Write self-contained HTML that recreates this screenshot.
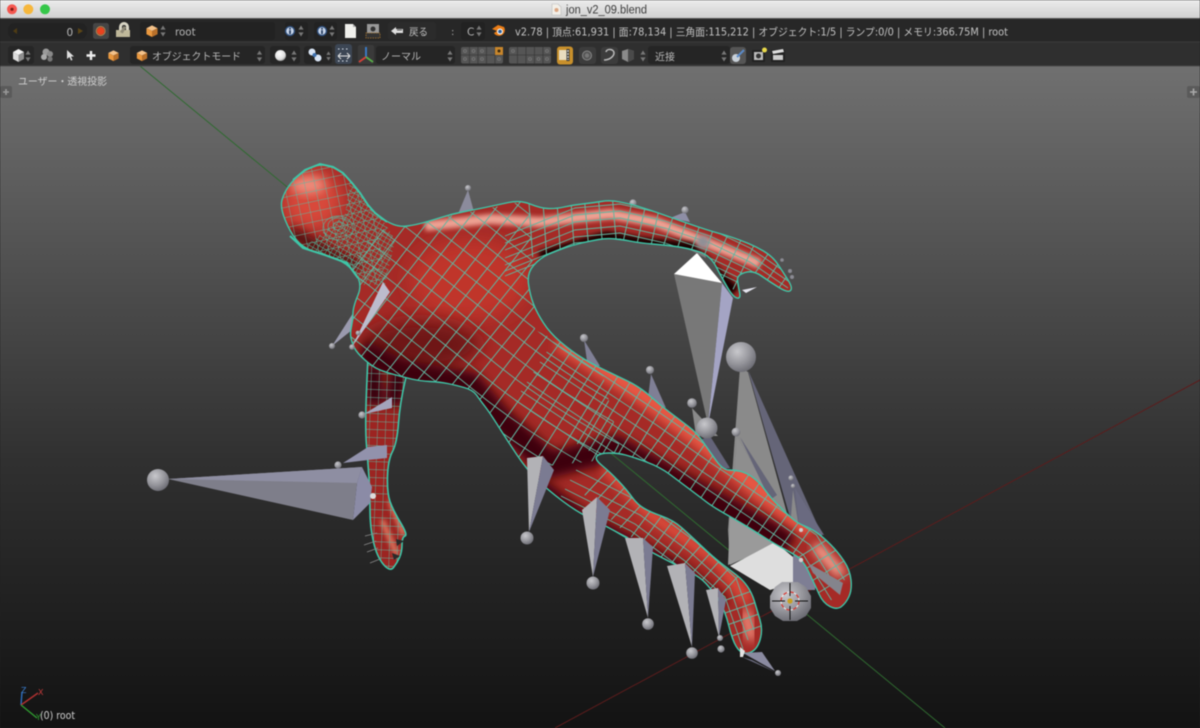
<!DOCTYPE html>
<html><head><meta charset="utf-8"><title>jon_v2_09.blend</title>
<style>html,body{margin:0;padding:0;background:#222;overflow:hidden}svg{display:block;filter:blur(.4px)}
text{font-family:"DejaVu Sans","Noto Sans CJK JP",sans-serif}</style></head><body>
<svg width="1200" height="728" viewBox="0 0 1200 728" xmlns="http://www.w3.org/2000/svg">
<defs>
<linearGradient id="bg" x1="0" y1="66" x2="0" y2="728" gradientUnits="userSpaceOnUse"><stop offset="0" stop-color="#707070"/><stop offset=".3" stop-color="#505050"/><stop offset=".6" stop-color="#303030"/><stop offset="1" stop-color="#131313"/></linearGradient>
<linearGradient id="tb" x1="0" y1="0" x2="0" y2="1"><stop offset="0" stop-color="#ececec"/><stop offset="1" stop-color="#d0d0d0"/></linearGradient>
<radialGradient id="sp" cx=".38" cy=".32" r=".75"><stop offset="0" stop-color="#c8c8cc"/><stop offset=".55" stop-color="#96969c"/><stop offset="1" stop-color="#66666e"/></radialGradient>
<radialGradient id="wsp" cx=".4" cy=".35" r=".7"><stop offset="0" stop-color="#fff"/><stop offset=".7" stop-color="#ddd"/><stop offset="1" stop-color="#888"/></radialGradient>
<filter id="b2" x="-30%" y="-30%" width="160%" height="160%"><feGaussianBlur stdDeviation="2.5"/></filter>
<filter id="b5" x="-30%" y="-30%" width="160%" height="160%"><feGaussianBlur stdDeviation="5"/></filter>
<filter id="b9" x="-30%" y="-30%" width="160%" height="160%"><feGaussianBlur stdDeviation="9"/></filter>
<pattern id="gridB" width="10" height="10" patternUnits="userSpaceOnUse" patternTransform="rotate(-12 320 210)"><path d="M0 0H10M0 0V10" fill="none" stroke="#62b5a0" stroke-width=".9"/></pattern>
<pattern id="gridD" width="4.500" height="4.500" patternUnits="userSpaceOnUse" patternTransform="rotate(30 340 250)"><path d="M0 0H5M0 0V5" fill="none" stroke="#46c4a4" stroke-width=".9"/></pattern>
<pattern id="gridC" width="8" height="8" patternUnits="userSpaceOnUse" patternTransform="rotate(2)"><path d="M0 0H8M0 0V8" fill="none" stroke="#62b5a0" stroke-width=".9"/></pattern>
<path id="bodyP" d="M285,219.5Q280,207 282,200Q284,193 288.5,186.5Q293,180 299,175Q305,170 312.5,167Q320,164 326.5,165.5Q333,167 338,170Q343,173 347.5,178Q352,183 356,188Q360,193 364,199Q368,205 371.5,209Q375,213 381,217.5Q387,222 393.5,224.5Q400,227 407.5,226Q415,225 424,222.5Q433,220 442.5,217Q452,214 462.5,212Q473,210 485,207.5Q497,205 508.5,202.5Q520,200 530,204Q540,208 547.5,208.5Q555,209 564,207Q573,205 582.5,204Q592,203 601,201.5Q610,200 620,202Q630,204 640,207Q650,210 664,215Q678,220 692.5,225Q707,230 716,232.5Q725,235 732.5,237.5Q740,240 748.5,243.5Q757,247 765,252Q773,257 778,264.5Q783,272 788,280Q793,288 790.500,290.500Q788,293 779,287.5Q770,282 761.5,276Q753,270 745,272.5Q737,275 737.5,280Q738,285 739.5,292Q741,299 737,298Q733,297 727.5,287.5Q722,278 716,266.5Q710,255 698.5,251.5Q687,248 676,246.5Q665,245 652.5,244Q640,243 632.5,241.5Q625,240 616,239Q607,238 598.5,239.5Q590,241 581.5,243Q573,245 564.5,248Q556,251 548,254.5Q540,258 533.5,265.5Q527,273 528.5,284Q530,295 533.5,304Q537,313 543.5,323Q550,333 560,341.5Q570,350 580,356.5Q590,363 602.5,369Q615,375 627.5,381Q640,387 650,396Q660,405 670,412.5Q680,420 688.5,426.5Q697,433 703.5,442.5Q710,452 716.5,461Q723,470 729,470Q735,470 741,471.5Q747,473 753.5,478Q760,483 765,490Q770,497 777.5,504.5Q785,512 791,517.5Q797,523 803.5,525.5Q810,528 816.5,532.5Q823,537 830.5,544.5Q838,552 844,561Q850,570 851,580Q852,590 849,596.5Q846,603 841.5,606.5Q837,610 830,606.5Q823,603 819,594Q815,585 809,572.5Q803,560 796.5,556Q790,552 781.5,547.5Q773,543 759,534Q745,525 729,516Q713,507 706.5,502Q700,497 690,489.5Q680,482 670,474.5Q660,467 646.5,462Q633,457 625.5,455Q618,453 609,453Q600,453 597,456Q594,459 602,465.5Q610,472 618.5,481Q627,490 632,497Q637,504 643.5,508Q650,512 661.5,516Q673,520 681.5,527.5Q690,535 701.5,546Q713,557 721.5,563.5Q730,570 736.5,575Q743,580 747.5,586.5Q752,593 754.5,601.5Q757,610 760,620Q763,630 760,640Q757,650 750,652.5Q743,655 738,649Q733,643 729,626.5Q725,610 718.5,600Q712,590 706,583.5Q700,577 690,572Q680,567 666.5,560Q653,553 641.5,546.5Q630,540 620,534Q610,528 593.5,520Q577,512 562.5,501Q548,490 537.5,480Q527,470 517,455Q507,440 498.5,426.5Q490,413 485,406.5Q480,400 476.5,395Q473,390 464,387.5Q455,385 447.5,383.5Q440,382 430,381.5Q420,381 411.5,379Q403,377 394,374.5Q385,372 379,369.5Q373,367 365,360Q357,353 354.5,348Q352,343 351,338Q350,333 351.5,326.5Q353,320 353,313.5Q353,307 358,295Q363,283 355,273Q347,263 336,259Q325,255 314,251.5Q303,248 296.5,240Q290,232 285,219.5Z"/>
<path id="foreP" d="M366.5,391Q365,427 366.5,445Q368,463 369,478Q370,493 370,510Q370,527 373.5,542Q377,557 383.5,564.5Q390,572 393.5,567.5Q397,563 399.5,557.5Q402,552 402,544.5Q402,537 405,536Q408,535 400.5,522.5Q393,510 390,501.5Q387,493 387.5,476.5Q388,460 392.5,451.5Q397,443 398.5,423Q400,403 405,381.5L410,360L368,355Z"/>
<clipPath id="mainClip"><use href="#bodyP"/></clipPath>
<clipPath id="foreClip"><use href="#foreP"/></clipPath>
<clipPath id="torsoR"><polygon points="350,262 380,230 530,200 535,330 600,362 622,458 510,470 345,372"/></clipPath>
<path id="tL" d="M300 190Q420 280 500 345T680 455" fill="none"/>
<path id="aL" d="M505 250 575 222 620 218 665 228 710 243 750 262 788 288" fill="none"/>
<path id="lL" d="M540 362 650 435 700 470 760 510 810 545 838 590" fill="none"/>
<path id="sL" d="M570 480 640 515 690 552 730 588 748 640" fill="none"/>
<symbol id="ud" viewBox="0 0 6 12" overflow="visible"><path d="M3 0.5 5.6 4.6H.4ZM3 11.5 .4 7.4H5.6Z" fill="#777"/></symbol>
<symbol id="cube" viewBox="0 0 14 14" overflow="visible"><path d="M7 1 13 4 7 7 1 4Z" fill="#f4c28a"/><path d="M1 4 7 7V13.5L1 10.5Z" fill="#e9983f"/><path d="M13 4 7 7V13.5L13 10.5Z" fill="#b8702a"/></symbol>
<symbol id="info" viewBox="0 0 14 14" overflow="visible"><circle cx="7" cy="7" r="6" fill="#2f4f7c"/><circle cx="7" cy="7" r="4.4" fill="#c9d6ea"/><rect x="6" y="6" width="2" height="4.6" fill="#22395c"/><rect x="6" y="3.4" width="2" height="1.8" fill="#22395c"/></symbol>
</defs>

<!-- viewport -->
<rect x="0" y="66" width="1200" height="662" fill="url(#bg)"/>
<line x1="140" y1="66" x2="945" y2="728" stroke="#2f6a30" stroke-width="1"/>
<line x1="555" y1="728" x2="1200" y2="380" stroke="#5c1c1c" stroke-width="1"/>

<!-- bones behind body -->
<g>
<polygon points="740,367 748,372 793,535 730,565 728,530" fill="#8a8a8a"/>
<polygon points="748,370 822,535 795,535" fill="#656578"/>
<polygon points="730,515 728,565 790,540 760,522" fill="#9a9a9a"/>
<polygon points="730,566 775,542 793,557 793,583 770,590" fill="#dedede"/>
<polygon points="793,557 793,590 815,590 822,535 800,530" fill="#7e7e94"/>
<polygon points="737,437 735,472 768,492" fill="#8e8e8e"/>
<polygon points="740,437 777,495 770,500" fill="#656578"/>
<polygon points="793,490 790,530 800,535" fill="#8a8a8a"/>
<polygon points="795,488 824,535 800,532" fill="#6a6a80"/>
<polygon points="674,274 722,283 708,425" fill="#787878"/>
<polygon points="722,283 733,298 708,425" fill="#a4a4c4"/>
<polygon points="697,253 674,274 722,283" fill="#fff"/>
<polygon points="690,250 703,240 706,258" fill="#7a7a7a"/>
<polygon points="692,408 696,436 718,436" fill="#8a8a8a"/>
<polygon points="710,436 730,468 718,470 700,440" fill="#636378"/>
<polygon points="468,190 458,214 474,212" fill="#8b8b9c"/>
<polygon points="670,218 685,212 690,222" fill="#8e8ea6"/>
<polygon points="584,340 588,368 600,366" fill="#7f7f95"/>
<polygon points="651,374 648,398 666,408" fill="#7f7f95"/>
<polygon points="332,346 355,310 352,330" fill="#9a9aae"/>
<circle cx="468" cy="188" r="3" fill="url(#sp)"/>
<circle cx="633" cy="203" r="3.6" fill="url(#sp)"/>
<circle cx="685" cy="210" r="3.6" fill="url(#sp)"/>
<circle cx="584" cy="338" r="4" fill="url(#sp)"/>
<circle cx="650" cy="370" r="4" fill="url(#sp)"/>
<circle cx="692" cy="403" r="4.8" fill="url(#sp)"/>
<circle cx="736" cy="432" r="4.4" fill="url(#sp)"/>
<circle cx="791" cy="478" r="2.6" fill="url(#sp)"/>
<circle cx="793" cy="486" r="2.2" fill="url(#sp)"/>
<circle cx="741" cy="357" r="15" fill="url(#sp)"/>
<circle cx="707" cy="428" r="10.5" fill="url(#sp)"/>
<circle cx="782" cy="260" r="1.8" fill="#8a8a92"/>
<circle cx="790" cy="271" r="2" fill="#8a8a92"/>
<circle cx="792" cy="277" r="2" fill="#8a8a92"/>
<path d="M742 290 757 287 746 293Z" fill="#e4e4ee"/>
<path d="M733 275 740 274 737 279Z" fill="#dcdce6"/>
<circle cx="332" cy="346" r="3" fill="url(#sp)"/>
</g>

<!-- forearm -->
<g clip-path="url(#foreClip)">
<rect x="360" y="350" width="55" height="225" fill="#9c2421"/>
<path d="M373 365 375 405M400 365 394 405" stroke="#300408" stroke-width="16" filter="url(#b5)" fill="none"/>
<path d="M390 500 404 535M382 520 397 555" stroke="#e07a62" stroke-width="5" filter="url(#b2)" fill="none"/>
<rect x="360" y="350" width="55" height="225" fill="url(#gridC)"/>
</g>
<use href="#foreP" fill="none" stroke="#3ec6a8" stroke-width="1.600"/>
<path d="M396 539 404 541 397 546ZM392 553 400 556 394 560Z" fill="#2a2a2a"/>
<path d="M365 536 377 533M364 545 376 541M367 552 378 548M370 563 380 559" stroke="#8a8a8a" stroke-width=".7"/>

<!-- main body -->
<g clip-path="url(#mainClip)">
<rect x="270" y="155" width="600" height="510" fill="#a52a26"/>
<!-- head shading -->
<ellipse cx="312" cy="200" rx="30" ry="30" fill="#d8483a" filter="url(#b9)"/>
<ellipse cx="308" cy="185" rx="18" ry="9" fill="#ee8c7c" filter="url(#b5)"/>
<path d="M290 232 325 252 358 268" stroke="#4a0810" stroke-width="12" fill="none" filter="url(#b5)"/>
<!-- chest / torso -->
<ellipse cx="470" cy="280" rx="60" ry="40" fill="#c03529" filter="url(#b9)"/>
<ellipse cx="420" cy="345" rx="60" ry="24" fill="#6e1216" filter="url(#b9)"/>
<path d="M425 226 490 219 540 222 610 214 655 222 700 240 760 264" stroke="#fbb8a8" stroke-width="10" fill="none" filter="url(#b2)" opacity=".85"/>
<path d="M360 352 400 372 470 385 500 420 550 465 615 448 700 495 790 545" stroke="#3c040c" stroke-width="26" fill="none" filter="url(#b5)"/>
<path d="M525 476 580 518 680 572 722 606" stroke="#3c040c" stroke-width="18" fill="none" filter="url(#b5)"/>
<path d="M540 257 607 237 640 243 690 248 735 292" stroke="#150206" stroke-width="12" fill="none" filter="url(#b2)"/>
<path d="M560 340 640 392 700 438 760 490 812 530" stroke="#e85844" stroke-width="20" fill="none" filter="url(#b5)"/>
<path d="M605 466 650 514 720 562 748 602" stroke="#e2503c" stroke-width="11" fill="none" filter="url(#b5)"/>
<path d="M815 545 842 575" stroke="#ffb09c" stroke-width="10" fill="none" filter="url(#b5)"/>
<path d="M745 610 752 640" stroke="#ff9c88" stroke-width="9" fill="none" filter="url(#b5)"/>
<!-- mesh -->
<polygon points="278,160 372,160 385,285 280,260" fill="url(#gridB)"/>
<polygon points="350,180 378,212 395,240 385,285 355,285 300,250 320,235 345,215" fill="url(#gridD)"/>
<g fill="none" stroke="#4fc0a8" stroke-width=".7" opacity=".8">
<ellipse cx="338" cy="226" rx="5" ry="4"/><ellipse cx="338" cy="226" rx="10" ry="8"/><ellipse cx="338" cy="228" rx="15" ry="12"/>
</g>
<g clip-path="url(#torsoR)" fill="none" stroke="#62b5a0" stroke-width=".9">
<path d="M300 190Q420 280 500 345T680 455" stroke-width="260" stroke-dasharray="1 14"/>
<use href="#tL" transform="translate(10,-14)"/><use href="#tL" transform="translate(20,-28)"/><use href="#tL" transform="translate(30,-42)"/><use href="#tL" transform="translate(40,-56)"/><use href="#tL" transform="translate(50,-70)"/><use href="#tL" transform="translate(60,-84)"/><use href="#tL" transform="translate(70,-98)"/>
<use href="#tL"/>
<use href="#tL" transform="translate(-10,14)"/><use href="#tL" transform="translate(-20,28)"/><use href="#tL" transform="translate(-30,42)"/><use href="#tL" transform="translate(-40,56)"/><use href="#tL" transform="translate(-50,70)"/><use href="#tL" transform="translate(-60,84)"/><use href="#tL" transform="translate(-70,98)"/>
</g>
<g fill="none" stroke="#62b5a0" stroke-width=".9">
<path d="M530 225 575 222 620 218 665 228 710 243 750 262 788 288" stroke-width="64" stroke-dasharray="1 13"/>
<use href="#aL" transform="translate(0,-14)"/><use href="#aL" transform="translate(0,-7)"/><use href="#aL"/><use href="#aL" transform="translate(0,8)"/><use href="#aL" transform="translate(0,15)"/><use href="#aL" transform="translate(0,21)"/><use href="#aL" transform="translate(0,26)"/>
<path d="M600 405 650 435 700 470 760 510 810 545 838 590" stroke-width="90" stroke-dasharray="1 12.5"/>
<use href="#lL" transform="translate(13,-20)"/><use href="#lL" transform="translate(6.500,-10)"/><use href="#lL"/><use href="#lL" transform="translate(-6.500,10)"/><use href="#lL" transform="translate(-13,20)"/><use href="#lL" transform="translate(-19,29)"/><use href="#lL" transform="translate(-25,38)"/>
<path d="M600 478 640 515 690 552 730 588 748 640" stroke-width="46" stroke-dasharray="1 11"/>
<use href="#sL" transform="translate(6,-10)"/><use href="#sL"/><use href="#sL" transform="translate(-5,9)"/><use href="#sL" transform="translate(-9,16)"/><use href="#sL" transform="translate(-13,22)"/>
</g>
</g>
<use href="#bodyP" fill="none" stroke="#3ec6a8" stroke-width="1.400" stroke-linejoin="round"/>
<path d="M293 180 305 170 320 164 333 167 343 173 352 183 360 193 368 205 375 213 387 222M290 236 303 248 325 255 347 263 358 278" fill="none" stroke="#3ec6a8" stroke-width="2"/>

<!-- bones in front -->
<g>
<polygon points="168,479 362,467 357,483 353,520" fill="#7e7e8a"/>
<polygon points="168,479 362,467 357,483" fill="#8e8ea2"/>
<polygon points="362,467 372,487 370,503 353,520 357,483" fill="#8b8ba6"/>
<circle cx="158" cy="480" r="11" fill="url(#sp)"/>
<polygon points="343,463 368,447 387,445 387,458 368,460" fill="#9292ac"/>
<circle cx="338" cy="465" r="3.600" fill="url(#sp)"/>
<polygon points="364,414 392,397 392,408" fill="#a4a4bc"/>
<circle cx="362" cy="415" r="3.600" fill="url(#sp)"/>
<circle cx="373" cy="496" r="3" fill="#dcdcdc"/>
<polygon points="352,347 383,282 390,292" fill="#bcbccc"/>
<circle cx="352" cy="347" r="2.800" fill="url(#sp)"/>
<circle cx="358" cy="333" r="2.400" fill="url(#sp)"/>
<circle cx="703" cy="242" r="6.500" fill="#8f8f96" filter="url(#b2)"/>
<polygon points="527,458 543,456 529,532" fill="#b2b2b6"/>
<polygon points="543,456 554,470 529,532" fill="#7b7b92"/>
<circle cx="527" cy="538" r="6.500" fill="url(#sp)"/>
<polygon points="582,510 597,497 593,577" fill="#b2b2b6"/>
<polygon points="597,497 610,510 593,577" fill="#7b7b92"/>
<circle cx="593" cy="583" r="6.500" fill="url(#sp)"/>
<polygon points="625,538 643,538 648,618" fill="#b2b2b6"/>
<polygon points="643,538 653,547 648,618" fill="#7b7b92"/>
<circle cx="648" cy="624" r="5.800" fill="url(#sp)"/>
<polygon points="667,566 685,563 692,647" fill="#b2b2b6"/>
<polygon points="685,563 695,573 692,647" fill="#7b7b92"/>
<circle cx="692" cy="653" r="5.800" fill="url(#sp)"/>
<polygon points="706,590 718,588 719,637" fill="#b2b2b6"/>
<polygon points="718,588 726,600 719,637" fill="#7b7b92"/>
<circle cx="720" cy="638" r="3" fill="url(#sp)"/>
<circle cx="721" cy="649" r="3.600" fill="url(#sp)"/>
<polygon points="743,653 762,652 775,671" fill="#8a8aa0"/>
<polygon points="742,657 775,672 752,660" fill="#6c6c80"/>
<polygon points="740,647 745,651 743,657 740,657" fill="#e4e4e4"/>
<circle cx="778" cy="673" r="3" fill="url(#sp)"/>
<polygon points="808,563 843,583 840,595 813,573" fill="#84848c"/>
<circle cx="801" cy="530" r="2" fill="#cfcfcf"/>
<circle cx="801" cy="560" r="2.200" fill="#cfcfcf"/>
</g>

<!-- 3D cursor sphere -->
<polygon points="782,582 798,582 806,587 811,596 811,608 806,616 797,621 783,621 775,616 770,608 770,596 775,587" fill="url(#sp)"/>
<circle cx="790" cy="601" r="9" fill="none" stroke="#eee" stroke-width="1"/>
<circle cx="790" cy="601" r="9" fill="none" stroke="#d8322c" stroke-width="1.200" stroke-dasharray="4 3"/>
<path d="M772 601H785M795 601H808M790 583V596M790 606V620" stroke="#111" stroke-width="1"/>
<circle cx="790" cy="601" r="2.600" fill="#c8a020"/>

<!-- viewport overlay -->
<text x="18" y="85" font-size="10.300" fill="#cfcfcf" textLength="89" lengthAdjust="spacingAndGlyphs">ユーザー・透視投影</text>
<rect x="0" y="86" width="12" height="12" rx="2" fill="#5a5a5a"/><path d="M3 92H9M6 89V95" stroke="#999" stroke-width="1.600"/>
<rect x="1187" y="86" width="13" height="12" rx="2" fill="#5a5a5a"/><path d="M1190 92H1197M1193.500 88.500V95.500" stroke="#aaa" stroke-width="1.600"/>
<path d="M21 705 22 692" stroke="#2d6fc0" stroke-width="1.400"/><path d="M21 705 38 693" stroke="#b03030" stroke-width="1.400"/><path d="M21 705 37 718" stroke="#2f9a30" stroke-width="1.400"/>
<text x="21" y="693" font-size="8" fill="#3a7ed0">Z</text><text x="38" y="695" font-size="8" fill="#c43a3a">X</text><text x="36" y="720" font-size="8" fill="#2f9a30">Y</text>
<text x="40" y="719" font-size="10.500" fill="#cdcdcd" textLength="35" lengthAdjust="spacingAndGlyphs">(0) root</text>

<!-- title bar -->
<rect x="0" y="0" width="1200" height="18" fill="url(#tb)"/><rect y="18" width="1200" height="1" fill="#555"/>
<circle cx="12" cy="9.300" r="5" fill="#f4574f"/><circle cx="12" cy="9.300" r="1.600" fill="#7c1a14"/>
<circle cx="28.300" cy="9.300" r="5" fill="#f6b73c"/><circle cx="45" cy="9.300" r="5" fill="#35c749"/>
<path d="M552 4H558L561 7V15H552Z" fill="#f2efe8" stroke="#bbb" stroke-width=".6"/><circle cx="556.500" cy="10" r="2" fill="#dca682"/>
<text x="566" y="13.300" font-size="11.500" fill="#3c3c3c" style="font-family:'Liberation Sans',sans-serif" textLength="81" lengthAdjust="spacingAndGlyphs">jon_v2_09.blend</text>

<!-- header 1 -->
<rect x="0" y="19" width="1200" height="22.500" fill="#272727"/>
<rect x="0" y="41.500" width="1200" height="1" fill="#3c3c3c"/>
<rect x="8" y="23" width="79" height="16" rx="7" fill="#222"/>
<path d="M17 28V34L13 31Z" fill="#4f3c14"/><path d="M78 28V34L83 31Z" fill="#5c4616"/>
<text x="66.500" y="36" font-size="10.500" fill="#b8b8b8">0</text>
<rect x="93" y="23" width="16" height="16" rx="2.500" fill="#454545"/><circle cx="100.700" cy="31" r="3.800" fill="#e8421e"/><circle cx="100.700" cy="31" r="4.500" fill="none" stroke="#d89a50" stroke-width=".7"/>
<rect x="116" y="30" width="14" height="7" fill="#bfb89a"/><path d="M119 30V27A5 5 0 0 1 129 27V30H126V27A2 2 0 0 0 122 27V30Z" fill="#d8d4c4"/><rect x="122" y="26" width="3" height="7" fill="#8f8a78" transform="rotate(30 123 29)"/>
<rect x="140" y="22" width="135" height="18" rx="3" fill="#222"/>
<use href="#cube" x="145.500" y="24.500" width="13" height="13"/><use href="#ud" x="160" y="25" width="6" height="12"/>
<text x="175" y="35.300" font-size="10.300" fill="#b4b4b4">root</text>
<rect x="285" y="22" width="23" height="18" rx="3" fill="#222"/><use href="#info" x="284" y="25" width="12" height="12"/><use href="#ud" x="298" y="25" width="6" height="12"/>
<rect x="314" y="22" width="23" height="18" rx="3" fill="#222"/><use href="#info" x="316" y="25" width="12" height="12"/><use href="#ud" x="329" y="25" width="6" height="12"/>
<path d="M345 24H353L356 27V38H345Z" fill="#f0f0ec"/><path d="M353 24V27H356Z" fill="#aaa"/>
<rect x="367" y="24" width="12" height="9" fill="#999"/><circle cx="373" cy="29" r="2.500" fill="#333"/><rect x="366" y="33" width="14" height="5" fill="#333" stroke="#a8752e" stroke-width=".8" stroke-dasharray="1.500 1"/>
<rect x="388" y="22" width="48" height="18" rx="3" fill="#2b2b2b"/>
<path d="M391 31 396 27V29H403V33H396V35Z" fill="#dfdfdf"/><rect x="397" y="29.500" width="5" height="1" fill="#555"/>
<text x="409" y="35.300" font-size="10" fill="#bdbdbd" textLength="19" lengthAdjust="spacingAndGlyphs">戻る</text>
<text x="451" y="35" font-size="10" fill="#aaa">:</text>
<rect x="461" y="22" width="24" height="18" rx="3" fill="#222"/><text x="467" y="35.300" font-size="10.500" fill="#b4b4b4">C</text><use href="#ud" x="476" y="25" width="6" height="12"/>
<path d="M492 29 498 25 504 27A5.500 5.500 0 1 1 494 33L497 31Z" fill="#ea7d17"/><circle cx="500" cy="31.500" r="3" fill="#f4f4f4"/><circle cx="500" cy="31.500" r="1.800" fill="#2a5d9c"/>
<text x="515" y="35.300" font-size="10.500" fill="#c2c2c2" textLength="493" lengthAdjust="spacingAndGlyphs">v2.78 | 頂点:61,931 | 面:78,134 | 三角面:115,212 | オブジェクト:1/5 | ランプ:0/0 | メモリ:366.75M | root</text>

<!-- header 2 -->
<rect x="0" y="42.500" width="1200" height="23" fill="#2f2f2f"/>
<rect x="0" y="65.500" width="1200" height="1" fill="#4a4a4a"/>
<rect x="8" y="46" width="26" height="18" rx="3" fill="#262626"/>
<path d="M18.500 49 24 52 18.500 55 13 52Z" fill="#f2f2f2"/><path d="M13 52 18.500 55V62L13 59Z" fill="#dcdcdc"/><path d="M24 52 18.500 55V62L24 59Z" fill="#8f8f8f"/><use href="#ud" x="25" y="50" width="6" height="12"/>
<circle cx="46" cy="52" r="3.500" fill="#9a9a9a"/><circle cx="50" cy="54" r="3" fill="#8a8a8a"/><circle cx="44" cy="57" r="3" fill="#aaa"/><circle cx="50" cy="59" r="2.600" fill="#777"/>
<path d="M67 50 67 59 69.500 57 71 60.500 72.500 60 71 56.500 74 56.500Z" fill="#dedede"/>
<path d="M86.500 55.500H95.500M91 51V60" stroke="#eee" stroke-width="2.400"/>
<use href="#cube" x="107.500" y="49.500" width="12" height="12"/>
<rect x="130" y="46" width="135" height="18" rx="3" fill="#252525"/>
<use href="#cube" x="136" y="49.500" width="12" height="12"/>
<text x="152" y="60" font-size="10.200" fill="#b8b8b8" textLength="89" lengthAdjust="spacingAndGlyphs">オブジェクトモード</text><use href="#ud" x="256.500" y="50" width="6" height="12"/>
<rect x="270" y="46" width="30" height="18" rx="3" fill="#252525"/><circle cx="280.500" cy="55.500" r="5.500" fill="url(#wsp)"/><use href="#ud" x="291" y="50" width="6" height="12"/>
<rect x="304" y="46" width="28" height="18" rx="3" fill="#252525"/><circle cx="312" cy="52" r="3.500" fill="#d8e4f4"/><circle cx="318" cy="58" r="3.500" fill="#d8e4f4"/><circle cx="314.500" cy="55" r="2" fill="#3c70b0"/><use href="#ud" x="326" y="50" width="5" height="12"/>
<rect x="335" y="44" width="17" height="20" rx="3" fill="#3c4654"/>
<path d="M338 49H350M338 61H350" stroke="#dfe6f0" stroke-width="1" stroke-dasharray="1.500 2.500"/><path d="M338 56 341 53M338 56 341 59M338 56H350M350 56 347 53M350 56 347 59" stroke="#e4e4e4" stroke-width="1" fill="none"/>
<rect x="358" y="45" width="16" height="19" rx="2" fill="#3a3a3a"/><path d="M366 57V47" stroke="#3a7ed0" stroke-width="1.800"/><path d="M366 57 359 62" stroke="#d84038" stroke-width="1.800"/><path d="M366 57 373 62" stroke="#58b048" stroke-width="1.800"/>
<rect x="376" y="46" width="79" height="18" rx="3" fill="#252525"/>
<text x="381" y="60" font-size="10.200" fill="#b8b8b8" textLength="40" lengthAdjust="spacingAndGlyphs">ノーマル</text><use href="#ud" x="447" y="50" width="6" height="12"/>
<g fill="#555">
<rect x="461" y="47" width="42" height="16.500" rx="2"/><rect x="509" y="47" width="42" height="16.500" rx="2"/>
</g>
<g stroke="#3a3a3a" stroke-width=".8"><path d="M469.500 47V63.500M478 47V63.500M486.500 47V63.500M495 47V63.500M461 55H503M517.500 47V63.500M526 47V63.500M534.500 47V63.500M543 47V63.500M509 55H551"/></g>
<rect x="495" y="47" width="8" height="8" fill="#c8862c"/><circle cx="499" cy="51" r="1.500" fill="#3a2a10"/>
<g fill="none" stroke="#7a7a7a" stroke-width=".8"><circle cx="465" cy="51" r="1.400"/><circle cx="473.500" cy="51" r="1.400"/><circle cx="482" cy="51" r="1.400"/><circle cx="465" cy="59" r="1.400"/><circle cx="473.500" cy="59" r="1.400"/><circle cx="482" cy="59" r="1.400"/><circle cx="499" cy="59" r="1.400"/><circle cx="513" cy="51" r="1.400"/><circle cx="547" cy="51" r="1.400"/><circle cx="530" cy="59" r="1.400"/><circle cx="538.500" cy="59" r="1.400"/><circle cx="547" cy="59" r="1.400"/></g>
<rect x="557" y="46.500" width="16" height="18" rx="3" fill="#c8902c"/><rect x="559" y="50" width="8" height="10" fill="#e8dcc0"/><path d="M568 49V61" stroke="#333" stroke-width="3"/><path d="M568 50V60" stroke="#ddd" stroke-width="1.400" stroke-dasharray="2 1"/>
<rect x="579" y="47" width="17" height="17" rx="3" fill="#3c3c3c"/><circle cx="587" cy="55.500" r="4.500" fill="#555" stroke="#888"/><circle cx="587" cy="55.500" r="2.200" fill="#777"/>
<rect x="601" y="47" width="17" height="17" rx="3" fill="#3c3c3c"/><path d="M604 60C610 60 614 56 614 53 614 49 607 48 606 52" fill="none" stroke="#bbb" stroke-width="1.500"/>
<path d="M622 51 628 49 634 51V59L628 62 622 59Z" fill="#8a8a8a"/><path d="M628 49 634 51V59L628 62Z" fill="#4a4a4a"/><use href="#ud" x="640" y="50" width="6" height="12"/>
<rect x="648" y="46" width="82" height="18" rx="3" fill="#252525"/>
<text x="655" y="60.300" font-size="10" fill="#b8b8b8" textLength="20" lengthAdjust="spacingAndGlyphs">近接</text><use href="#ud" x="721" y="50" width="6" height="12"/>
<rect x="730" y="47" width="16" height="17" rx="3" fill="#555"/><circle cx="736" cy="58" r="4" fill="#c8d0d8"/><path d="M737 57 744 50" stroke="#5a8ac8" stroke-width="2"/>
<rect x="752" y="50" width="13" height="12" fill="#222"/><rect x="754" y="52" width="9" height="8" fill="#bbb"/><circle cx="758.500" cy="56" r="2.500" fill="#333"/><circle cx="764.500" cy="50" r="2.500" fill="#e8d84a"/>
<rect x="771" y="50" width="14" height="12" fill="#222"/><rect x="773" y="55" width="10" height="5" fill="#ccc"/><path d="M772 51 783 49 784 52 773 54Z" fill="#ddd"/>
</svg>
</body></html>
